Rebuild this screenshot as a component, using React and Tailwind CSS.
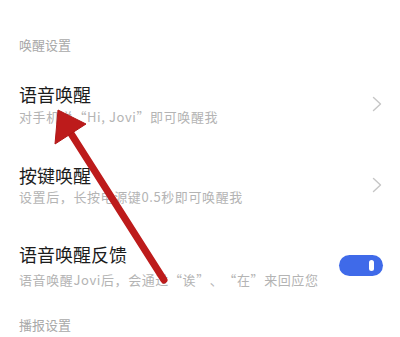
import React from "react";

function Chevron() {
  return (
    <svg width="10" height="16" viewBox="0 0 10 16" className="shrink-0">
      <path d="M1.5 1.5 L8.5 8 L1.5 14.5" fill="none" stroke="#c6c6c6" strokeWidth="1.4" strokeLinecap="round" strokeLinejoin="round" />
    </svg>
  );
}

function Row({ title, sub, right, subGap }) {
  return (
    <div className="flex items-center justify-between pl-[19px] pr-[18px]">
      <div className="flex flex-col">
        <div className="text-[18px] leading-[24px] text-[#1c1c1c]">{title}</div>
        <div className={`text-[13px] leading-[18px] tracking-[0.6px] text-[#b4b4b4] [font-feature-settings:'fwid'] [text-spacing-trim:space-all] ${subGap}`}>{sub}</div>
      </div>
      {right}
    </div>
  );
}

function N({ children }) {
  return <span className="[font-feature-settings:normal]">{children}</span>;
}

export default function App() {
  return (
    <div
      lang="zh-CN"
      className="relative w-[400px] h-[337px] overflow-hidden bg-white"
      style={{ fontFamily: '"Noto Sans CJK SC", "Noto Sans", sans-serif' }}
    >
      <div className="pt-[36px] pl-[19px] text-[13px] leading-[18px] text-[#a9a9a9]">唤醒设置</div>
      <div className="mt-[28px]">
        <Row
          title="语音唤醒"
          sub={<>对手机说“<N>Hi, Jovi</N>”即可唤醒我</>}
          subGap="mt-[2px]"
          right={<Chevron />}
        />
      </div>
      <div className="mt-[37px]">
        <Row
          title="按键唤醒"
          sub={<>设置后，长按电源键<N>0.5</N>秒即可唤醒我</>}
          subGap="mt-[1px]"
          right={<Chevron />}
        />
      </div>
      <div className="mt-[36px]">
        <Row
          title="语音唤醒反馈"
          sub={<>语音唤醒<N>Jovi</N>后，会通过“诶”、“在”来回应您</>}
          subGap="mt-[5px]"
          right={
            <div className="flex h-[21px] w-[44px] items-center justify-end rounded-full bg-[#3f6ae9] pr-[9px] mr-[-1px]">
              <div className="h-[11px] w-[5px] rounded-full bg-white" />
            </div>
          }
        />
      </div>
      <div className="mt-[27px] pl-[19px] text-[13px] leading-[18px] text-[#a9a9a9]">播报设置</div>

      <svg className="absolute left-0 top-0 pointer-events-none" width="400" height="337" viewBox="0 0 400 337">
        <line x1="70" y1="132" x2="164" y2="280" stroke="#bd1b1b" strokeWidth="7" strokeLinecap="round" />
        <polygon points="58,110 55,144 86,124" fill="#bd1b1b" stroke="#b01717" strokeWidth="1" strokeLinejoin="round" />
      </svg>
    </div>
  );
}
